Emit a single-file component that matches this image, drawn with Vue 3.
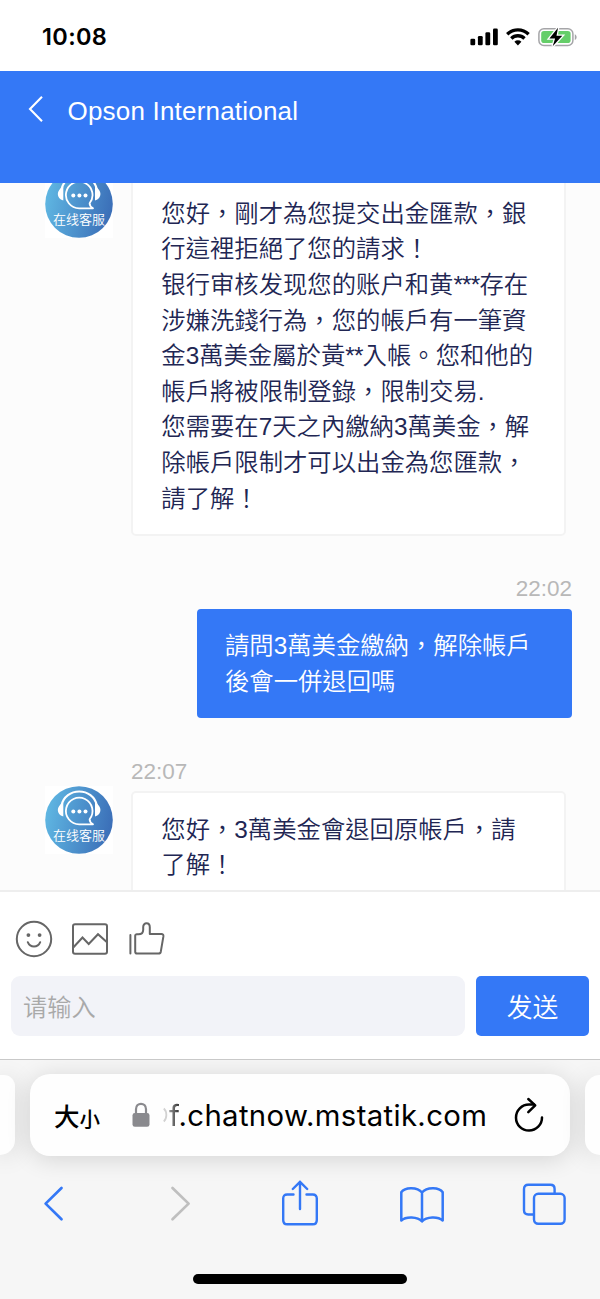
<script setup>
const refused = [
  '您好，剛才為您提交出金匯款，銀',
  '行這裡拒絕了您的請求！',
  '银行审核发现您的账户和黄***存在',
  '涉嫌洗錢行為，您的帳戶有一筆資',
  '金3萬美金屬於黃**入帳。您和他的',
  '帳戶將被限制登錄，限制交易.',
  '您需要在7天之內繳納3萬美金，解',
  '除帳戶限制才可以出金為您匯款，',
  '請了解！',
]
const messages = [
  { id: 1, from: 'agent', time: '', lines: refused },
  { id: 2, from: 'me', time: '22:02', lines: ['請問3萬美金繳納，解除帳戶', '後會一併退回嗎'] },
  { id: 3, from: 'agent', time: '22:07', lines: ['您好，3萬美金會退回原帳戶，請', '了解！'] },
]
// Splits a line into plain text and runs of masking asterisks.
const runs = (line) => line.split(/(\*+)/).filter(Boolean)
</script>

<template>
  <div class="phone">
    <div class="status">
      <span class="clock">10:08</span>
      <svg class="indicators" width="110" height="24" viewBox="0 0 110 24">
        <g fill="#000">
          <rect x="0.4" y="13.8" width="4.8" height="6.4" rx="1.3" />
          <rect x="7.9" y="11" width="4.8" height="9.2" rx="1.3" />
          <rect x="15.4" y="7.3" width="4.8" height="12.9" rx="1.3" />
          <rect x="23" y="3.6" width="4.8" height="16.6" rx="1.3" />
        </g>
        <g fill="none" stroke="#000" stroke-width="3.3">
          <path d="M37.2 9.3a15.3 15.3 0 0 1 21.4 0" />
          <path d="M41.3 13.5a9.3 9.3 0 0 1 13.2 0" />
        </g>
        <path d="M44.4 16.8a5 5 0 0 1 7 0L47.9 20.5z" fill="#000" />
        <rect x="68.9" y="3.8" width="34" height="16.6" rx="5" fill="none" stroke="#a5a5a8" stroke-width="1.5" />
        <rect x="71.2" y="6.1" width="29.4" height="12" rx="2.8" fill="#65ce69" />
        <path d="M104.8 9.3c2.4.8 2.4 5 0 5.8z" fill="#a5a5a8" />
        <path d="M88 2.8 79.4 13.4h5.7L82.7 21.3 92.3 10.7h-5.8z" fill="#000" stroke="#fff" stroke-width="2.6" paint-order="stroke" />
      </svg>
    </div>

    <header class="title-bar">
      <svg width="16" height="28" viewBox="0 0 16 28">
        <path d="M14 1.8 2 14 14 26.2" fill="none" stroke="#fff" stroke-width="2.1" />
      </svg>
      <h1>Opson International</h1>
    </header>

    <main class="chat">
      <div class="thread">
        <article v-for="m in messages" :key="m.id" class="message" :class="m.from">
          <div v-if="m.from === 'agent'" class="avatar">
            <svg width="68" height="68" viewBox="0 0 68 68">
              <defs>
                <linearGradient id="avatar-fill" x1="0" y1="0.3" x2="1" y2="0.5">
                  <stop offset="0" stop-color="#60b8e3" />
                  <stop offset="1" stop-color="#3b6fb8" />
                </linearGradient>
              </defs>
              <circle cx="34" cy="34" r="33.8" fill="url(#avatar-fill)" />
              <path d="M16.3 20C20 .6 48.5 .6 52 20" fill="none" stroke="#fff" stroke-width="2.1" />
              <path d="M18.3 16.5v14C11 28.5 11 20 18.3 16.5zM50 16.5v14C57.3 28.5 57.3 20 50 16.5z" fill="#fff" />
              <path d="M44.6 33.3A13.3 13.3 0 1 0 34.2 38.3H48C46 37.2 44.6 35.6 44.6 33.3z" fill="none" stroke="#fff" stroke-width="1.8" stroke-linejoin="round" />
              <g fill="#fff">
                <circle cx="28.3" cy="25.4" r="2" /><circle cx="34.4" cy="25.4" r="2" /><circle cx="40.5" cy="25.4" r="2" />
              </g>
            </svg>
            <span>在线客服</span>
          </div>
          <div class="body">
            <time>{{ m.time }}</time>
            <div class="bubble">
              <p v-for="line in m.lines" :key="line">
                <span v-for="(run, i) in runs(line)" :key="i" :class="{ mask: run[0] === '*' }">{{ run }}</span>
              </p>
            </div>
          </div>
        </article>
      </div>
    </main>

    <section class="composer">
      <div class="tools">
        <svg width="38" height="38" viewBox="0 0 38 38" fill="none" stroke="#666" stroke-width="2">
          <circle cx="19" cy="19" r="17.2" />
          <path d="M12.8 22.2c2.4 5.8 10 5.8 12.4 0" stroke-linecap="round" />
          <circle cx="13.4" cy="15.1" r="1.9" fill="#666" stroke="none" />
          <circle cx="24.6" cy="15.1" r="1.9" fill="#666" stroke="none" />
        </svg>
        <svg width="38" height="38" viewBox="0 0 38 38" fill="none" stroke="#666" stroke-width="2">
          <rect x="2" y="4.2" width="34" height="29.6" rx="2" />
          <path d="M2 27.8 11.5 17.5 17.7 24 27 14.2 36 22.3" />
        </svg>
        <svg width="38" height="38" viewBox="0 0 38 38" fill="none" stroke="#666" stroke-width="2" stroke-linecap="round" stroke-linejoin="round">
          <path d="M3.4 15v18.6M8.2 15.6v16.2q0 1.8 1.8 1.8h21.5q1.9 0 2.3-1.9l2.6-15.3q.3-2.3-2-2.3H22.8V7.3C22.8 2 16.2 2 16.2 7v2.8c0 3.1-2.1 4.5-4.8 4.5H9.6q-1.4 0-1.4 1.5" />
        </svg>
      </div>
      <div class="entry">
        <div class="field">请输入</div>
        <button class="send">发送</button>
      </div>
    </section>

    <footer class="browser">
      <div class="tabs">
        <div class="tab edge"></div>
        <div class="tab address">
          <span class="size-big">大</span><span class="size-small">小</span>
          <svg class="lock" width="18" height="26" viewBox="0 0 18 26">
            <path d="M4 12V7.2C4 0 14 0 14 7.2V12" fill="none" stroke="#8a8a8e" stroke-width="2.2" />
            <rect x="0.5" y="11" width="17" height="13.8" rx="2.4" fill="#8a8a8e" />
          </svg>
          <svg class="fade" width="5" height="22" viewBox="0 0 5 22">
            <path d="M.8 4.500C4.200 7.500 4.200 14.500 .8 17.500" fill="none" stroke="#d2d2d2" stroke-width="1.800" />
          </svg>
          <span class="url"><b>f</b>.chatnow.mstatik.com</span>
          <svg class="reload" width="30" height="36" viewBox="0 0 30 36" fill="none" stroke="#000" stroke-width="2.5" stroke-linecap="round" stroke-linejoin="round">
            <path d="M28 20.5A13 13 0 1 1 15 7.6h5" />
            <path d="M14.3 2 21.2 8.3 14.3 15.2" />
          </svg>
        </div>
        <div class="tab edge"></div>
      </div>
      <nav>
        <svg width="24" height="48" viewBox="0 0 24 48" fill="none" stroke="#3478f6" stroke-width="2.7" stroke-linecap="round" stroke-linejoin="round">
          <path d="M20.5 8 4.6 23.6 20.5 39.2" />
        </svg>
        <svg width="24" height="48" viewBox="0 0 24 48" fill="none" stroke="#bfbfbf" stroke-width="2.7" stroke-linecap="round" stroke-linejoin="round">
          <path d="M4.5 8 20.6 23.6 4.5 39.2" />
        </svg>
        <svg width="38" height="48" viewBox="0 0 38 48" fill="none" stroke="#3478f6" stroke-width="2.4" stroke-linecap="round" stroke-linejoin="round">
          <path d="M12.5 14.5H6.2Q2.2 14.5 2.2 18.5V40Q2.2 44.3 6.2 44.3H31.8Q35.8 44.3 35.8 40V18.5Q35.8 14.5 31.8 14.5H25.5" />
          <path d="M19 29V1.8M11.8 9 19 1.8 26.2 9" />
        </svg>
        <svg width="46" height="48" viewBox="0 0 46 48" fill="none" stroke="#3478f6" stroke-width="2.5" stroke-linejoin="round">
          <path d="M23 12.5C18.5 7 6 6.7 2.3 12.3V40.5C7 36.2 18.5 36.5 23 41.5 27.5 36.5 39 36.2 43.7 40.5V12.3C40 6.7 27.5 7 23 12.5zV41.5" />
        </svg>
        <svg width="44" height="48" viewBox="0 0 44 48" fill="none" stroke="#3478f6" stroke-width="2.4" stroke-linejoin="round">
          <path d="M11.5 34.5H6.3Q2 34.5 2 30.3V9Q2 4.8 6.3 4.8H28.3Q32.6 4.8 32.6 9V13.3" />
          <rect x="12" y="13.8" width="30.6" height="30" rx="4.2" />
        </svg>
      </nav>
      <div class="home"></div>
    </footer>
  </div>
</template>

<style>
body { margin: 0; overflow: hidden; }
</style>

<style scoped>
.phone {
  width: 600px; height: 1299px; overflow: hidden; background: #fff;
  display: flex; flex-direction: column;
  font-family: "Liberation Sans", "Noto Sans CJK TC", sans-serif;
}
svg { display: block; flex: none; }
.status {
  height: 71px; flex: none; box-sizing: border-box;
  padding: 0 20px 0 42px; display: flex; justify-content: space-between;
}
.clock { font: 600 23.5px/74px Inter, sans-serif; letter-spacing: 0.35px; }
.indicators { margin-top: 25px; }
.title-bar {
  height: 112px; flex: none; box-sizing: border-box; background: #3478f6; color: #fff;
  display: flex; align-items: flex-start; padding: 24px 0 0 28px; gap: 23.5px;
}
h1 { margin: 0; font-size: 26px; font-weight: 400; line-height: 32px; letter-spacing: 0.2px; white-space: nowrap; }
.chat { height: 707px; flex: none; overflow: hidden; background: #fcfcfc; border-bottom: 2px solid #eee; }
.thread { margin-top: -46px; }
.message { display: flex; padding: 0 28px 0 45px; margin-bottom: 35px; }
.message.me { justify-content: flex-end; }
.avatar {
  width: 68px; height: 68px; margin: 33px 18px 0 0; flex: none; background: #fff;
  position: relative;
}
.avatar span {
  position: absolute; left: 0; right: 0; top: 38.5px; text-align: center; white-space: nowrap;
  color: #fff; font: 350 13px/20px "Noto Sans CJK SC", sans-serif;
}
.body { display: flex; flex-direction: column; }
time { height: 38px; line-height: 37px; font-size: 22.5px; color: #b8b8b8; }
.me time { text-align: right; line-height: 36px; }
.bubble {
  box-sizing: border-box; background: #fff; border: 2px solid #f3f3f3; border-radius: 5px;
  padding: 18.6px 28.3px 17.4px; color: #212653; font-size: 24.35px; font-weight: 350;
}
.agent .bubble { width: 435px; }
.me .bubble { width: 375px; background: #3478f6; border-color: #3478f6; color: #fff; padding: 17.7px 26px 16.3px; border-radius: 4px; }
.bubble p { margin: 0; height: 35.65px; line-height: 35.65px; white-space: nowrap; }
.mask { letter-spacing: -0.8px; }
.composer { height: 167px; flex: none; background: #fff; }
.tools { display: flex; gap: 18px; padding: 28px 0 0 15px; }
.entry { display: flex; gap: 11px; padding: 18px 11px 0; }
.field {
  width: 454px; height: 60px; box-sizing: border-box; padding-left: 12px;
  background: #f2f3f8; border-radius: 9px; color: #a9a9a9;
  font: 350 24.2px/60px "Noto Sans CJK SC", sans-serif;
}
.send {
  flex: 1; height: 60px; padding: 0; border: 0; border-radius: 5px; background: #3478f6; color: #fff;
  font: 350 25.8px/60px "Noto Sans CJK SC", sans-serif;
}
.browser {
  height: 240px; flex: none; box-sizing: border-box; border-top: 1px solid #c9c9c9;
  background: #f6f6f6; overflow: hidden;
}
.tabs { display: flex; align-items: center; gap: 15px; height: 82px; padding-top: 14px; }
.tab { background: #fefefe; border-radius: 20px; box-shadow: 0 3px 24px rgba(0, 0, 0, 0.14); }
.tab.edge { flex: 1; height: 80px; }
.tab.edge:first-child { border-radius: 0 15px 20px 0; }
.tab.edge:last-child { border-radius: 20px 0 0 20px; }
.address { width: 540px; height: 82px; flex: none; display: flex; align-items: center; box-sizing: border-box; padding-left: 24px; }
.size-big, .size-small { font: 500 25.5px/40px "Noto Sans CJK TC", sans-serif; }
.size-small { font-size: 20.5px; margin-top: 5px; }
.lock { margin-left: 32px; }
.fade { margin-left: 13px; }
.url {
  margin: 2px 0 0 1px; width: 321px; flex: none; font: 400 29.3px/40px Inter, sans-serif; letter-spacing: 0.35px;
  white-space: nowrap;
}
.url b { font-weight: 400; background: linear-gradient(90deg, #999, #333); background-clip: text; color: transparent; }
.reload { margin-left: 23.5px; }
nav { display: flex; padding: 24px 0 0 41px; }
nav svg:nth-child(2) { margin-left: 103px; }
nav svg:nth-child(3) { margin-left: 89px; }
nav svg:nth-child(4) { margin-left: 80px; }
nav svg:nth-child(5) { margin-left: 76.5px; }
.home { width: 214px; height: 10px; border-radius: 5px; background: #000; margin: 46px auto 0; }
</style>
